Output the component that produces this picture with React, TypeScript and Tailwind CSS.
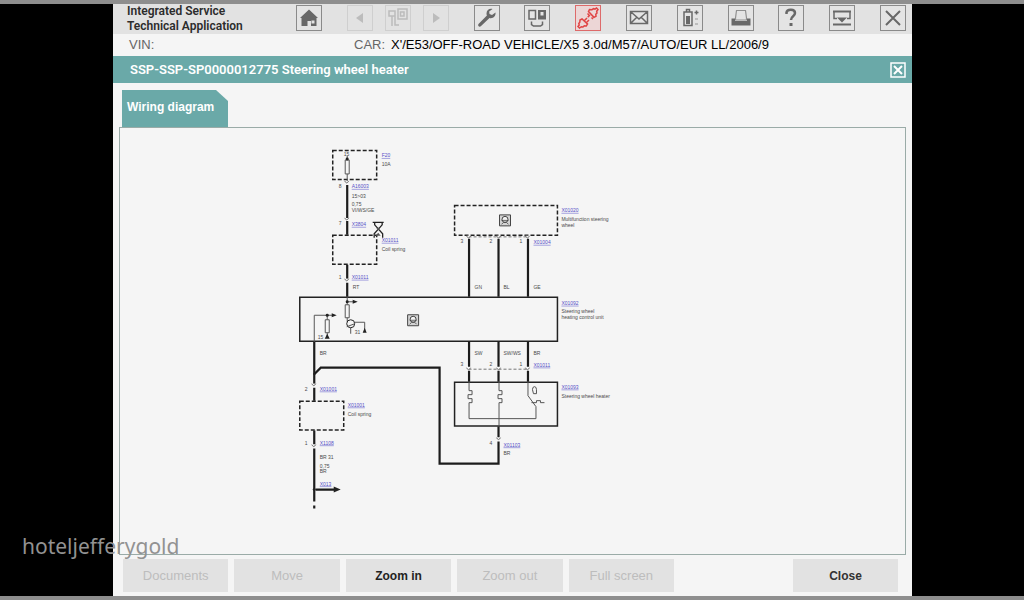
import type { ReactNode } from 'react'

const carInfo = "X'/E53/OFF-ROAD VEHICLE/X5 3.0d/M57/AUTO/EUR LL/2006/9"

const footerButtons = [
  { label: 'Documents', enabled: false },
  { label: 'Move', enabled: false },
  { label: 'Zoom in', enabled: true },
  { label: 'Zoom out', enabled: false },
  { label: 'Full screen', enabled: false },
]

function ToolButton({ label, tone = 'normal', children }: { label: string; tone?: 'normal' | 'off' | 'alert'; children: ReactNode }) {
  const tones = {
    normal: 'border-[#8a8a8a] bg-[#e4e4e4] text-[#686868]',
    off: 'border-[#cfcfcf] bg-[#e2e2e2] text-[#bcbcbc]',
    alert: 'border-[#dd6a6a] bg-[#ecd6d6] text-[#e04444]',
  }
  return (
    <button type="button" aria-label={label} disabled={tone === 'off'} className={`size-[26px] shrink-0 border ${tones[tone]}`}>
      <svg viewBox="0 0 24 24" className="size-6" fill="none" stroke="currentColor" strokeWidth="1.5">
        {children}
      </svg>
    </button>
  )
}

function Toolbar() {
  return (
    <nav className="flex flex-1 items-start justify-between pt-px">
      <ToolButton label="Home">
        <path d="M3 12 12 3.500l9 8.500h-1.500v8H14v-5h-3.500v5h-6v-8z" fill="currentColor" stroke="none" />
        <path d="M14.500 14.500h3v3h-3z" fill="#e4e4e4" stroke="none" />
      </ToolButton>
      <div className="flex gap-3">
        <ToolButton label="Back" tone="off">
          <path d="M15 7v10l-7-5z" fill="currentColor" stroke="none" />
        </ToolButton>
        <ToolButton label="Pages" tone="off">
          <path d="M12 3h9v10h-9zM3 5h6v5H3zM6 10v10M9 7v12h4M14.500 6H18v4h-3.500z" />
        </ToolButton>
        <ToolButton label="Forward" tone="off">
          <path d="M9 7v10l7-5z" fill="currentColor" stroke="none" />
        </ToolButton>
      </div>
      <ToolButton label="Service">
        <path d="M20.500 6.500 17 9l-2.500-1-.3-2.500L17.500 3c-3-.8-6 1-6 4.500 0 .8.1 1.300.4 2L3.500 18c-1.300 1.500.8 3.600 2.300 2.300L14.500 12c3.500 1 6.500-2 6-5.500z" fill="currentColor" stroke="none" />
      </ToolButton>
      <ToolButton label="Control units">
        <path d="M4 4.500h6.500v8.500H4z" />
        <path d="M13 4h8v9.500h-8z" fill="currentColor" stroke="none" />
        <path d="M15.500 6h3v3.500h-3z" fill="#e4e4e4" stroke="none" />
        <path d="M6.500 15.500v3l2 1.500h7l2-1.500v-3" />
      </ToolButton>
      <ToolButton label="Connection" tone="alert">
        <path d="m12.500 5.500 1-2 2.500.2 1.500-1 1.500.5L20.500 2 22 3.500l-1.300 1.800.3 1.700-1.200 1.300.2 2-2 1zM12.500 5.500l5.500 6M14 9l-2.300 2.300M11.500 7.500l1.500 1.500M15.500 11.500l1.500 1.500" />
        <path d="m6 13-2 1-.2 2.200-1 1.300.4 1.500L2 20.500 3.500 22l1.800-1.300 1.700.3 1.300-1.200 2 .2 1.200-2.200zM5.500 12.500l6.500 6M8.500 14.500l2.500-2.500M10.500 16.500l2.500-2.500" />
      </ToolButton>
      <ToolButton label="Messages">
        <path d="M3.500 5.500h17v12h-17zM4 6l8 7 8-7M4 17l6-6M20 17l-6-6" />
      </ToolButton>
      <ToolButton label="Battery">
        <path d="M6 6h8v13.500H6zM8.500 3.500h3V6h-3z" />
        <path d="M8 10h4v8H8z" fill="currentColor" stroke="none" />
        <path d="M16.500 6.500h4M18.500 4.500v4" />
        <path d="M17 13h3M17 18h3" stroke="#b0b0b0" />
      </ToolButton>
      <ToolButton label="Print">
        <path d="M6.500 12 7.500 4.500h9l1 7.500v2h-11z" stroke="#909090" strokeWidth="1.200" />
        <path d="M2.500 12.500h3.500v2.500h12v-2.500h3.500v7h-19z" fill="currentColor" stroke="none" />
      </ToolButton>
      <ToolButton label="Help">
        <path d="M7.500 8V6.500C8 2.800 16 2.800 16 7c0 3.500-4 3-4 7" strokeWidth="2.500" />
        <path d="M10.500 17h3v3h-3z" fill="currentColor" stroke="none" />
      </ToolButton>
      <ToolButton label="Minimize">
        <path d="M3 5.500h18M3 18.500h18" strokeWidth="2" />
        <path d="M4 6v6.500h3M20 6v6.500h-3" />
        <path d="M7 11.500h10L12 16.500z" fill="currentColor" stroke="none" />
      </ToolButton>
      <ToolButton label="Exit">
        <path d="m5 5 14 14M19 5 5 19" strokeWidth="2" />
      </ToolButton>
    </nav>
  )
}

type Label = [x: number, y: number, text: string]

const links: Label[] = [
  [382, 157, 'F20'],
  [352, 188, 'A16003'],
  [352, 226, 'X3804'],
  [382, 242, 'X01011'],
  [352, 279, 'X01011'],
  [562, 212, 'X01020'],
  [534, 244, 'X01004'],
  [562, 305, 'X01092'],
  [534, 367, 'X01011'],
  [562, 389, 'X01093'],
  [320, 391, 'X01001'],
  [348, 407, 'X01001'],
  [320, 445, 'X1108'],
  [320, 486, 'X013'],
  [504, 447, 'X01103'],
]

const notes: Label[] = [
  [344, 156, '15'],
  [382, 166, '10A'],
  [339, 188, '8'],
  [352, 198, '15>03'],
  [352, 206, '0,75'],
  [352, 212, 'VI/WS/GE'],
  [339, 225, '7'],
  [382, 251, 'Coil spring'],
  [339, 279, '1'],
  [353, 289, 'RT'],
  [562, 221, 'Multifunction steering'],
  [562, 227, 'wheel'],
  [461, 243, '3'],
  [490, 243, '2'],
  [520, 243, '1'],
  [475, 289, 'GN'],
  [504, 289, 'BL'],
  [534, 289, 'GE'],
  [562, 313, 'Steering wheel'],
  [562, 319, 'heating control unit'],
  [355, 334, '31'],
  [318, 339, '15'],
  [320, 355, 'BR'],
  [475, 355, 'SW'],
  [504, 355, 'SW/WS'],
  [534, 355, 'BR'],
  [461, 366, '3'],
  [490, 366, '2'],
  [520, 366, '1'],
  [562, 398, 'Steering wheel heater'],
  [305, 391, '2'],
  [348, 416, 'Coil spring'],
  [305, 445, '1'],
  [320, 459, 'BR 31'],
  [320, 468, '0,75'],
  [320, 473, 'BR'],
  [490, 445, '4'],
  [504, 455, 'BR'],
]

// small cups where a wire enters a plug
const plugs = [
  [347, 184], [347, 221], [347, 282],
  [469, 239], [499, 239], [528, 239],
  [469, 371], [499, 371], [528, 371],
  [314, 387], [314, 448], [499, 441],
]

function WheelIcon({ x, y }: { x: number; y: number }) {
  return (
    <g transform={`translate(${x} ${y})`} stroke="#444" fill="none">
      <path d="M0 0h11v11H0z" fill="#d4d4d4" />
      <circle cx="5.500" cy="4.500" r="3" fill="#f4f4f4" />
      <path d="M2 5.500h7M2 9.500l2-2h3l2 2" strokeWidth=".8" />
    </g>
  )
}

function WiringDiagram() {
  return (
    <svg viewBox="120 128 786 427" className="size-full" role="img" aria-label="Steering wheel heater wiring diagram" fontFamily="'Liberation Sans', Arial, sans-serif" fontSize="5">
      <g fill="none" stroke="#222" strokeWidth="1.500">
        <path d="M333 150.500h44v29h-44zM333 235.500h44v29h-44zM300 401.500h44v29h-44zM455 205.500h103v30h-103z" strokeDasharray="4 2" />
        <path d="M300 297.500h258v44h-258zM455 382.500h103v44h-103z" />
      </g>

      {/* wires */}
      <g fill="none" stroke="#1c1c1c" strokeWidth="2.200">
        <path d="M347.500 185v33M347.500 221v14M347.500 265v14M347.500 283v14" />
        <path d="M469.500 239v58M499 239v58M528.500 239v58" />
        <path d="M469.500 342v25M499 342v25M528.500 342v25M469.500 371v11M499 371v11M528.500 371v11" />
        <path d="M314.500 342v42M314.500 388v13M314.500 431v14M314.500 449v53M314.500 506v3" />
        <path d="M499 427v11M499 442v22h-59v-96H321l-7 7M316 490h20" />
      </g>

      {/* inner circuits */}
      <g fill="none" stroke="#555">
        <path d="M347.500 156v4M345.500 160h4v14h-4zM347.500 174v8" />
        <path d="M347.500 297v8M345.500 305h4v13h-4zM347.500 318v4M347 302h8M355 322.500h10v8M351 328v6" />
        <circle cx="351" cy="324" r="4" stroke="#222" />
        <path d="m347 327 8-3M314.500 342v-26.500h19M327.500 315v5M325.500 320h4v13h-4zM327.500 333v4" />
        <path d="M469.500 382v9h3v4h-4v4h4v4h-3v16h67v-12M499.500 382v9h3v4h-4v4h4v4h-3v23M528.500 382v14l8 11M532 403h5v-2h4v2h4M533 390a2 3 0 1 1 4 0v4h-3z" />
        <path d="M469 237h59M469 369.500h59" strokeDasharray="3 2" strokeWidth=".8" />
      </g>
      <g fill="#222">
        <circle cx="347.500" cy="159" r="1.500" />
        <circle cx="347.500" cy="302" r="1.500" />
        <circle cx="327.500" cy="315.500" r="1.500" />
        <circle cx="314.500" cy="490" r="1.500" />
        <path d="m353 300 5 2-5 2zM332 313.500l5 2-5 2zM363 333l2-5 2 5zM325 339l2.500-5 2.500 5zM334 487l7 3-7 3z" />
      </g>
      <g fill="#f5f5f5" stroke="#555" strokeWidth=".8">
        {plugs.map(([x, y]) => (
          <path key={`${x}-${y}`} d={`M${x - 2} ${y - 3}q2 4 4 0`} />
        ))}
      </g>
      <WheelIcon x={500} y={215} />
      <WheelIcon x={408} y={315} />

      <g fill="#4a4a4a">
        {notes.map(([x, y, text]) => (
          <text key={`${x}-${y}`} x={x} y={y}>{text}</text>
        ))}
      </g>
      <g fill="#5550c8" textDecoration="underline">
        {links.map(([x, y, text]) => (
          <text key={`${x}-${y}`} x={x} y={y}>{text}</text>
        ))}
      </g>

      {/* hourglass pointer */}
      <path d="M373 222.500h11M375 222v3l8 9v4M382.500 222v3l-8 9v4" fill="none" stroke="#222" strokeWidth="1.300" />
      <path d="M376.500 228h4l-2 2.500zM376 236l2.500-3 2.500 3z" fill="#555" />
    </svg>
  )
}

export default function App() {
  return (
    <div className="relative flex min-h-screen flex-col border-y-4 border-[#8e8e8e] bg-black font-['Liberation_Sans',Arial,sans-serif] text-black">
      <div className="ml-[113px] mr-28 flex flex-1 flex-col bg-[#f5f5f5]">
        <header className="flex h-[30px] bg-[#e2e2e2] pl-3.5 pr-1.5">
          <h1 className="w-[169px] font-['Roboto',sans-serif] text-xs leading-[15px] font-semibold text-[#2c2c2c]">
            Integrated Service
            <br />
            Technical Application
          </h1>
          <Toolbar />
        </header>

        <div className="flex h-[22px] items-center pl-4 text-[13px]">
          <span className="w-[225px] text-[#666]">VIN:</span>
          <span className="w-[37px] text-[#666]">CAR:</span>
          <span className="whitespace-nowrap">{carInfo}</span>
        </div>

        <div className="flex h-[27px] items-center justify-between bg-[#6aa9a8] pl-[17px] pr-1.5 text-white">
          <h2 className="font-['Roboto',sans-serif] text-[13px] font-semibold">SSP-SSP-SP0000012775 Steering wheel heater</h2>
          <button type="button" aria-label="Close document">
            <svg viewBox="0 0 16 16" className="size-4" fill="none" stroke="currentColor">
              <path d="M1 1h14v14H1z" strokeWidth="1.500" />
              <path d="m4 4 8 8M12 4l-8 8" strokeWidth="2" />
            </svg>
          </button>
        </div>

        <main className="flex flex-1 flex-col px-1.5 pt-[7px]">
          <div role="tablist" className="flex pl-[3px]">
            <button
              type="button"
              role="tab"
              aria-selected="true"
              className="h-[37px] w-[106px] bg-[#6aa9a8] pb-1 pl-[5px] text-left text-xs font-bold text-white [clip-path:polygon(0_0,94px_0,100%_11px,100%_100%,0_100%)]"
            >
              Wiring diagram
            </button>
          </div>
          <section className="min-h-0 flex-1 border border-[#9aaba7]">
            <WiringDiagram />
          </section>
        </main>

        <footer className="flex justify-between py-1 pl-2.5 pr-3.5">
          <div className="grid w-[551px] grid-cols-5 gap-1.5">
            {footerButtons.map(({ label, enabled }) => (
              <button
                key={label}
                type="button"
                disabled={!enabled}
                className="h-[33px] bg-[#e2e2e2] text-xs font-bold text-[#222] disabled:text-[13px] disabled:font-normal disabled:text-[#bdbdbd]"
              >
                {label}
              </button>
            ))}
          </div>
          <button type="button" className="h-[33px] w-[105px] bg-[#e2e2e2] text-xs font-bold text-[#333]">
            Close
          </button>
        </footer>
      </div>

      <p className="absolute bottom-[38px] left-[22px] font-['Noto_Sans',sans-serif] text-[21px] leading-6 text-[#929292]">hoteljefferygold</p>
    </div>
  )
}
